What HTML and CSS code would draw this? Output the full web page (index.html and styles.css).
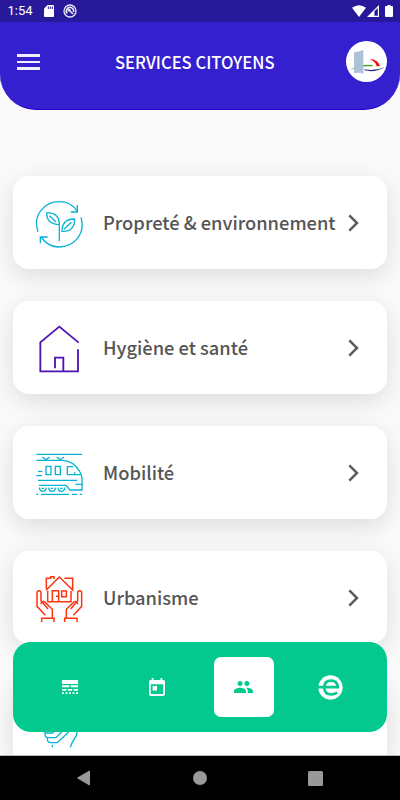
FILE: index.html
```html
<!DOCTYPE html>
<html lang="fr">
<head>
<meta charset="utf-8">
<meta name="viewport" content="width=device-width, initial-scale=1">
<title>Services citoyens</title>
<link rel="stylesheet" href="styles.css">
</head>
<body>
<div class="phone">
  <div class="status">
    <span class="clock">1:54</span>
    <svg class="sd" viewBox="0 0 10 12"><path fill="#fff" d="M3.500 0H9a1 1 0 0 1 1 1v10a1 1 0 0 1-1 1H1a1 1 0 0 1-1-1V3.700z"/><path stroke="#28199b" stroke-width="1" d="M4.300 1.500V4M6.300 1.500V4M8.300 1.500V4"/></svg>
    <svg class="sync" viewBox="0 0 14 14" fill="none" stroke="#e8e6f8"><circle cx="7" cy="7" r="6" stroke-width="1.300"/><path stroke-width="1.600" d="M4.200 9.500A3.700 3.700 0 0 1 7 3.300a3.700 3.700 0 0 1 3.500 4.700M5.500 5.500l4.500 4.500M5.500 7.500v-2h2"/></svg>
    <span class="spacer"></span>
    <svg class="wifi" viewBox="0 0 14 12"><path fill="#fff" d="M0 2.800Q7-2.500 14 2.800L7 12z"/></svg>
    <svg class="signal" viewBox="0 0 12 12"><path fill="#fff" d="M12 0v12H0z"/><path fill="#28199b" d="M7.400 6.300L10.800 3v7.800H7.400z"/></svg>
    <svg class="battery" viewBox="0 0 8 12"><path fill="#fff" d="M2.500 0h3v1H7q1 0 1 1v9q0 1-1 1H1q-1 0-1-1V2q0-1 1-1h1.500z"/></svg>
  </div>
  <header class="header">
    <div class="menu"><i></i><i></i><i></i></div>
    <h1>SERVICES CITOYENS</h1>
    <svg class="avatar" viewBox="18 18 123 123"><circle cx="79.500" cy="79.500" r="61.500" fill="#fff"/><path fill="#4da32a" d="M29 105Q58 86 98 90v4Q58 91 29 105z"/><path fill="#adc1d7" d="M42 52q15-1 28-8v72q-10-4-28-2z"/><path fill="#ea1010" d="M88 72q27 1 32 22h-10Q108 80 88 72z"/><path fill="#202b79" d="M73 103q30 7 62-7-29 18-62 10z"/></svg>
  </header>
  <main class="list">
    <section class="card">
      <svg class="icon cyan" viewBox="42 24 150 150"><path d="M54 125C37 77 72 35 118 35q35 0 54 29M172 45v21h-20M183 82c15 50-22 89-66 89q-33 0-54-30M61 160v-19h22M118 153V99M80 69q38-3 38 35-38-2-38-35zM88 77l20 19M164 87q-38-1-38 37 38 2 38-37zM132 118l22-21"/></svg>
      <h2>Propreté &amp; environnement</h2>
      <svg class="chevron" viewBox="0 0 12 18"><path d="M1.300 1.300L9 9l-7.700 7.700"/></svg>
    </section>
    <section class="card">
      <svg class="icon violet" viewBox="42 39 150 150"><path d="M176 98L118 50 61 97v87h113v-66M105 175v-32h25v41"/></svg>
      <h2>Hygiène et santé</h2>
      <svg class="chevron" viewBox="0 0 12 18"><path d="M1.300 1.300L9 9l-7.700 7.700"/></svg>
    </section>
    <section class="card">
      <svg class="icon cyan" viewBox="42 24 150 150"><path d="M49 43h137M67 51l11 8 11-8M110 51l11 8 11-8M49 61h75q37 0 56 35 6 10 6 24v30h-36l-12-14H57M54 121h118M78 79h15v25H78zM106 79h15v25h-15zM159 80h-17v24h41M164 97v7M54 94h13M49 107h17M166 133h20M58 143q1 11 10 11t11-11M86 143q1 11 10 11t11-11M114 143q1 11 10 11t11-11M64 145h8M92 145h8M120 145h8M49 163h6M63 163h84M155 163h17M179 163h7"/></svg>
      <h2>Mobilité</h2>
      <svg class="chevron" viewBox="0 0 12 18"><path d="M1.300 1.300L9 9l-7.700 7.700"/></svg>
    </section>
    <section class="card">
      <svg class="icon red" viewBox="42 39 150 150"><path d="M78 91l40-40 40 39V55h-25M79 86V55h13v-5h10v7M83 92v33h70V92M97 125V92h19v33M108 109h6M125 93h14v17h-14zM76 166l-25-27V99q0-7 6-7t6 7v23l21 25M63 133q0-10 10-8l24 23v25M65 186v-11h37v11M160 166l25-27V99q0-7-6-7t-6 7v23l-21 25M173 133q0-10-10-8l-24 23v25M171 186v-11h-37v11"/></svg>
      <h2>Urbanisme</h2>
      <svg class="chevron" viewBox="0 0 12 18"><path d="M1.300 1.300L9 9l-7.700 7.700"/></svg>
    </section>
    <section class="card">
      <svg class="icon cyan" viewBox="102 204 150 150"><path d="M129 303l7 6q-3 11 6 14-1 15 10 15h20l34-32M138 309h19l8-7M142 323h26l19-19M232 304q-2 15-9 23-8 10-12 25M157 345v7"/></svg>
    </section>
  </main>
  <nav class="tabs">
    <span class="tab"><svg class="glyph" viewBox="0 0 16 14" fill="#fff"><path d="M0 0h16v4H0zM0 5.300h7.300v2H0zM8.700 5.300H16v2H8.700zM0 9h4.400v1.800H0zM5.800 9h4.400v1.800H5.800zM11.600 9H16v1.800h-4.400zM0 12.200h2V14H0zM3.500 12.200h2V14h-2zM7 12.200h2V14H7zM10.500 12.200h2V14h-2zM14 12.200h2V14h-2z"/></svg></span>
    <span class="tab"><svg class="calendar" viewBox="3 1 18 20" fill="#fff"><path d="M19 3h-1V1h-2v2H8V1H6v2H5c-1.110 0-1.990.9-1.990 2L3 19c0 1.100.89 2 2 2h14c1.100 0 2-.9 2-2V5c0-1.100-.9-2-2-2zm0 16H5V8h14v11zM7 10h5v5H7z"/></svg></span>
    <span class="tab active"><svg class="people" viewBox="1 5 22 14" fill="#03c98e"><path d="M16 11c1.660 0 2.990-1.340 2.990-3S17.660 5 16 5s-3 1.340-3 3 1.340 3 3 3zm-8 0c1.660 0 2.990-1.340 2.990-3S9.660 5 8 5 5 6.340 5 8s1.340 3 3 3zm0 2c-2.330 0-7 1.170-7 3.500V19h14v-2.500C15 14.170 10.330 13 8 13zm8 0c-.29 0-.62.020-.97.050 1.160.84 1.970 1.970 1.970 3.450V19h6v-2.500c0-2.330-4.670-3.500-7-3.500z"/></svg></span>
    <span class="tab"><svg class="brand" viewBox="353 135 76 74"><circle cx="391" cy="172" r="37" fill="#fff"/><path fill="none" stroke="#03c98e" stroke-width="8" d="M352 171h24M376 171h37q-1-20-20-20-21 0-21 21 0 21 22 21 10 0 17-6"/></svg></span>
  </nav>
  <footer class="system">
    <svg class="back" viewBox="0 0 14 16"><path d="M13 1v14L1 8z"/></svg>
    <i class="home"></i>
    <i class="recent"></i>
  </footer>
</div>
</body>
</html>
```
FILE: styles.css
```css
* { box-sizing: border-box; }
body { margin: 0; overflow: hidden; background: #fafafa; font-family: "Noto Sans CJK SC", "Noto Sans", sans-serif; }
svg { display: block; flex: none; }
.phone { position: relative; display: flex; flex-direction: column; width: 400px; height: 800px; overflow: hidden; }
.status { flex: none; display: flex; align-items: center; height: 22px; padding: 0 7px 0 7.500px; background: #28199b; color: #fff; }
.clock { width: 36.500px; font: 13px/22px Roboto, sans-serif; letter-spacing: 0; }
.sd { width: 10px; height: 12px; }
.sync { width: 14px; height: 14px; margin-left: 9px; }
.spacer { flex: 1; }
.wifi { width: 14px; height: 12px; }
.signal { width: 12px; height: 12px; margin-left: 1px; }
.battery { width: 8px; height: 12px; margin-left: 6px; }
.header { flex: none; display: flex; align-items: center; height: 87.500px; padding: 0 13px 8px 17px; background: #3520cf; border-bottom: 1px solid #2500c8; border-radius: 0 0 36px 36px; }
.menu { display: flex; flex-direction: column; gap: 4px; width: 98px; padding-top: 1px; }
.menu i { width: 23px; height: 2.500px; background: #f2f0ff; }
h1 { flex: 1; margin: 0; padding-top: 1px; color: #fff; font-size: 16.600px; line-height: 24px; font-weight: 500; white-space: nowrap; }
.avatar { width: 41px; height: 41px; }
.list { flex: 1; min-height: 0; display: flex; flex-direction: column; gap: 32.500px; padding: 66.500px 13px 0; overflow: hidden; }
.card { flex: none; display: flex; align-items: center; height: 92.500px; padding: 0 27px 0 21px; border-radius: 16px; background: #fff; box-shadow: 0 7px 24px rgba(0, 0, 0, .12); }
.icon { width: 50px; height: 50px; margin-top: 2px; fill: none; stroke-width: 4; }
.cyan { stroke: #08b4d4; }
.violet { stroke: #5011b5; stroke-width: 5.500; }
.red { stroke: #fb3510; stroke-width: 4.500; }
h2 { flex: 1; margin: 0 0 0 19px; color: #555; font-size: 18.300px; line-height: 28px; font-weight: 500; white-space: nowrap; }
.chevron { width: 12px; height: 18px; margin-top: 1px; fill: none; stroke: #5c5c5e; stroke-width: 2.500; }
.tabs { position: absolute; left: 13px; bottom: 68px; display: flex; align-items: center; justify-content: space-around; width: 374px; height: 90px; padding: 0 13px; border-radius: 18px; background: #03c98e; }
.tab { display: flex; align-items: center; justify-content: center; width: 60px; height: 60px; border-radius: 7px; }
.active { background: #fff; }
.glyph { width: 16px; height: 14px; }
.calendar { width: 16px; height: 18px; }
.people { width: 19px; height: 12px; }
.brand { width: 25px; height: 25px; }
.system { flex: none; display: flex; align-items: center; justify-content: space-between; height: 45px; padding: 0 77px 0 76px; border-top: 1px solid #b5b5b5; background: #000; }
.back { width: 15px; height: 16px; fill: #999; stroke: #999; stroke-linejoin: round; }
.home { width: 14px; height: 14px; border-radius: 50%; background: #999; }
.recent { width: 15px; height: 15px; border-radius: 1.500px; background: #999; }
```
